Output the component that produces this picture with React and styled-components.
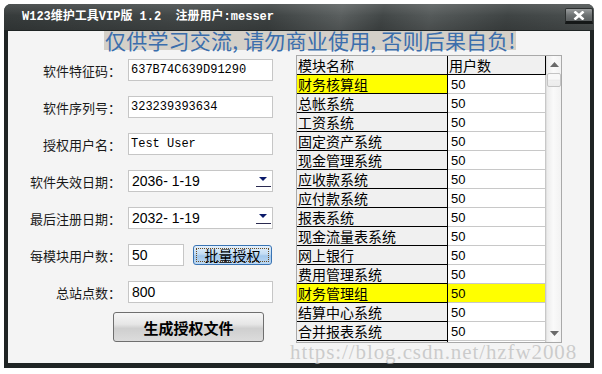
import styled, { createGlobalStyle } from "styled-components";

const GlobalStyle = createGlobalStyle`
  html, body {
    margin: 0;
    padding: 0;
    background: #fff;
  }
  body {
    font-family: "Noto Sans CJK SC", "Liberation Sans", sans-serif;
  }
  * {
    box-sizing: border-box;
  }
`;

const Page = styled.div`
  position: relative;
  width: 602px;
  height: 374px;
  overflow: hidden;
  padding: 4px 0 0 4px;
  background: #fff;
`;

const Window = styled.div`
  width: 590px;
  height: 364px;
  display: flex;
  flex-direction: column;
  background: #1f2424;
  border-radius: 7px 7px 0 0;
  overflow: hidden;
`;

const TitleBar = styled.div`
  height: 26px;
  display: flex;
  align-items: flex-start;
  padding: 0 1px 0 18px;
  background:
    linear-gradient(180deg, rgba(255, 255, 255, 0.12) 0%, rgba(255, 255, 255, 0) 45%, rgba(0, 0, 0, 0.15) 100%),
    linear-gradient(100deg, #363b3b 0%, #434848 30%, #3d4242 45%, #5a5f5f 57%, #424747 64%, #555a5a 72%, #3f4444 85%, #4b5050 100%);
`;

const TitleText = styled.div`
  height: 26px;
  line-height: 26px;
  color: #fff;
  font-family: "Liberation Mono", "Noto Sans CJK SC", monospace;
  font-size: 12px;
  font-weight: bold;
  white-space: pre;
`;

const CloseButton = styled.div`
  margin: 4px 0 0 auto;
  width: 28px;
  height: 16px;
  display: flex;
  align-items: center;
  justify-content: center;
  background: linear-gradient(180deg, #9a9d9e 0%, #6f7374 50%, #5a5e5f 100%);
  border: 1px solid #2c3030;
  border-bottom: 3px solid #151818;
  border-radius: 2px 2px 0 0;
`;

const Frame = styled.div`
  flex: 1;
  display: flex;
  padding: 1px 4px 5px 4px;
`;

const Client = styled.div`
  flex: 1;
  display: flex;
  flex-direction: column;
  background: #f4f4f4;
`;

const Banner = styled.div`
  align-self: flex-start;
  margin-left: 96px;
  height: 19px;
  line-height: 19px;
  padding: 0 1px;
  background: #d4d0c8;
  color: #3b6eac;
  font-size: 21px;
  letter-spacing: 0.2px;
  white-space: pre;
`;

const Main = styled.div`
  display: flex;
  margin-top: 5px;
`;

const LeftPane = styled.div`
  width: 288px;
  padding-top: 4px;
  display: flex;
  flex-direction: column;
`;

const FormStack = styled.div`
  display: flex;
  flex-direction: column;
  gap: 15px;
`;

const FormRow = styled.div`
  display: flex;
  align-items: center;
  height: 22px;
`;

const Label = styled.div`
  width: 113px;
  margin-right: 7px;
  text-align: right;
  font-size: 13px;
  color: #1a1a1a;
  white-space: nowrap;
`;

const Field = styled.div`
  width: ${({ $w }) => $w || 145}px;
  height: 22px;
  display: flex;
  align-items: center;
  padding-left: ${({ $mono }) => ($mono ? 2 : 3)}px;
  background: #fff;
  border: 1px solid #c6c6c6;
  font-family: ${({ $mono }) =>
    $mono ? '"Liberation Mono", monospace' : '"Liberation Sans", sans-serif'};
  font-size: ${({ $mono }) => ($mono ? 12 : 14)}px;
  color: #000;
  white-space: pre;
`;

const DropButton = styled.div`
  margin-left: auto;
  width: 18px;
  height: 20px;
  display: flex;
  align-items: center;
  justify-content: center;
`;

const BlueButton = styled.div`
  margin-left: 9px;
  width: 79px;
  height: 20px;
  padding: 2px;
  border: 1px solid #3a74b4;
  border-radius: 3px;
  background: linear-gradient(180deg, #e3f0fc 0%, #c3dcf3 45%, #a3c8ec 55%, #bcd8f3 100%);
`;

const FocusRing = styled.div`
  height: 100%;
  display: flex;
  align-items: center;
  justify-content: center;
  border: 1px dotted #6a4a20;
  font-size: 14px;
  color: #000;
  line-height: 1;
`;

const GenButton = styled.div`
  margin: 9px 0 0 105px;
  width: 151px;
  height: 30px;
  display: flex;
  align-items: center;
  justify-content: center;
  border: 1px solid #6f6f6f;
  border-radius: 3px;
  background: linear-gradient(180deg, #f6f6f6 0%, #e6e6e6 40%, #cfcfcf 55%, #dcdcdc 100%);
  font-size: 15px;
  font-weight: bold;
  color: #000;
`;

const Grid = styled.div`
  width: 266px;
  height: 288px;
  display: flex;
  border: 1px solid #a9a9a9;
  background: #fff;
`;

const GridBody = styled.div`
  width: 249px;
  display: flex;
  flex-direction: column;
  overflow: hidden;
`;

const GridRow = styled.div`
  display: grid;
  grid-template-columns: 151px 98px;
  flex-shrink: 0;
  height: 19px;
`;

const Cell = styled.div`
  height: 19px;
  display: flex;
  align-items: center;
  line-height: 1;
  white-space: nowrap;
  color: #000;
  ${({ $fixed, $hl }) =>
    $fixed
      ? `
    padding-left: 1px;
    font-size: 14px;
    background: ${$hl ? "#ffff00" : "#f0f0f0"};
    border-right: 1px solid #000;
    border-bottom: 1px solid #000;
  `
      : `
    padding-left: 3px;
    font-family: "Liberation Sans", sans-serif;
    font-size: 13px;
    background: ${$hl ? "#ffff00" : "#fff"};
    border-right: 1px solid #c8c8c8;
    border-bottom: 1px solid #c8c8c8;
  `}
`;

const HeadCell = styled.div`
  height: 19px;
  display: flex;
  align-items: center;
  line-height: 1;
  padding-left: 1px;
  font-size: 14px;
  color: #000;
  white-space: nowrap;
  background: #f0f0f0;
  border-right: 1px solid #000;
  border-bottom: 1px solid #000;
`;

const ScrollBar = styled.div`
  width: 15px;
  display: flex;
  flex-direction: column;
  align-items: center;
  background: linear-gradient(90deg, #ececec 0%, #fafafa 45%, #f2f2f2 100%);
  border-left: 1px solid #e0e0e0;
`;

const ArrowBox = styled.div`
  width: 100%;
  height: 17px;
  display: flex;
  align-items: center;
  justify-content: center;
  margin-top: ${({ $down }) => ($down ? "auto" : 0)};
`;

const Thumb = styled.div`
  width: 14px;
  height: 14px;
  border: 1px solid #c4c4c4;
  border-radius: 2px;
  background: linear-gradient(180deg, #f8f8f8 0%, #f8f8f8 45%, #d8d8d8 50%, #f0f0f0 55%, #ececec 100%);
`;

const Watermark = styled.div`
  position: absolute;
  left: 290px;
  top: 340px;
  font-family: "Liberation Serif", serif;
  font-size: 21px;
  letter-spacing: 0.9px;
  color: rgba(190, 190, 190, 0.75);
  white-space: nowrap;
  pointer-events: none;
`;

const modules = [
  { name: "财务核算组", hlName: true },
  { name: "总帐系统" },
  { name: "工资系统" },
  { name: "固定资产系统" },
  { name: "现金管理系统" },
  { name: "应收款系统" },
  { name: "应付款系统" },
  { name: "报表系统" },
  { name: "现金流量表系统" },
  { name: "网上银行" },
  { name: "费用管理系统" },
  { name: "财务管理组", hlName: true, hlCount: true },
  { name: "结算中心系统" },
  { name: "合并报表系统" },
  { name: "", count: "" },
];

function DropArrow() {
  return (
    <DropButton>
      <svg width="16" height="14" viewBox="0 0 16 14">
        <path d="M4 3 L12 3 L8 7 Z" fill="#0a1a6a" />
        <rect x="1" y="12" width="15" height="1" fill="#2a2a50" />
      </svg>
    </DropButton>
  );
}

function Tri({ down }) {
  return (
    <svg width="9" height="5" viewBox="0 0 9 5">
      <path d={down ? "M0 0 L9 0 L4.5 5 Z" : "M0 5 L9 5 L4.5 0 Z"} fill="#6a6a6a" />
    </svg>
  );
}

export default function App() {
  return (
    <Page>
      <GlobalStyle />
      <Window>
        <TitleBar>
          <TitleText>W123维护工具VIP版 1.2  注册用户:messer</TitleText>
          <CloseButton>
            <svg width="12" height="9" viewBox="0 0 12 9">
              <path d="M1.5 0.5 L10.5 8.5 M10.5 0.5 L1.5 8.5" stroke="#fff" strokeWidth="2.6" />
            </svg>
          </CloseButton>
        </TitleBar>
        <Frame>
          <Client>
            <Banner>仅供学习交流, 请勿商业使用, 否则后果自负!</Banner>
            <Main>
              <LeftPane>
                <FormStack>
                  <FormRow>
                    <Label>软件特征码：</Label>
                    <Field $mono>637B74C639D91290</Field>
                  </FormRow>
                  <FormRow>
                    <Label>软件序列号：</Label>
                    <Field $mono>323239393634</Field>
                  </FormRow>
                  <FormRow>
                    <Label>授权用户名：</Label>
                    <Field $mono>Test User</Field>
                  </FormRow>
                  <FormRow>
                    <Label>软件失效日期：</Label>
                    <Field>
                      {"2036- 1-19"}
                      <DropArrow />
                    </Field>
                  </FormRow>
                  <FormRow>
                    <Label>最后注册日期：</Label>
                    <Field>
                      {"2032- 1-19"}
                      <DropArrow />
                    </Field>
                  </FormRow>
                  <FormRow>
                    <Label>每模块用户数：</Label>
                    <Field $w={56}>50</Field>
                    <BlueButton>
                      <FocusRing>批量授权</FocusRing>
                    </BlueButton>
                  </FormRow>
                  <FormRow>
                    <Label>总站点数：</Label>
                    <Field>800</Field>
                  </FormRow>
                </FormStack>
                <GenButton>生成授权文件</GenButton>
              </LeftPane>
              <Grid>
                <GridBody>
                  <GridRow>
                    <HeadCell>模块名称</HeadCell>
                    <HeadCell>用户数</HeadCell>
                  </GridRow>
                  {modules.map((m, i) => (
                    <GridRow key={i}>
                      <Cell $fixed $hl={m.hlName}>{m.name}</Cell>
                      <Cell $hl={m.hlCount}>{m.count ?? "50"}</Cell>
                    </GridRow>
                  ))}
                </GridBody>
                <ScrollBar>
                  <ArrowBox>
                    <Tri />
                  </ArrowBox>
                  <Thumb />
                  <ArrowBox $down>
                    <Tri down />
                  </ArrowBox>
                </ScrollBar>
              </Grid>
            </Main>
          </Client>
        </Frame>
      </Window>
      <Watermark>https://blog.csdn.net/hzfw2008</Watermark>
    </Page>
  );
}
